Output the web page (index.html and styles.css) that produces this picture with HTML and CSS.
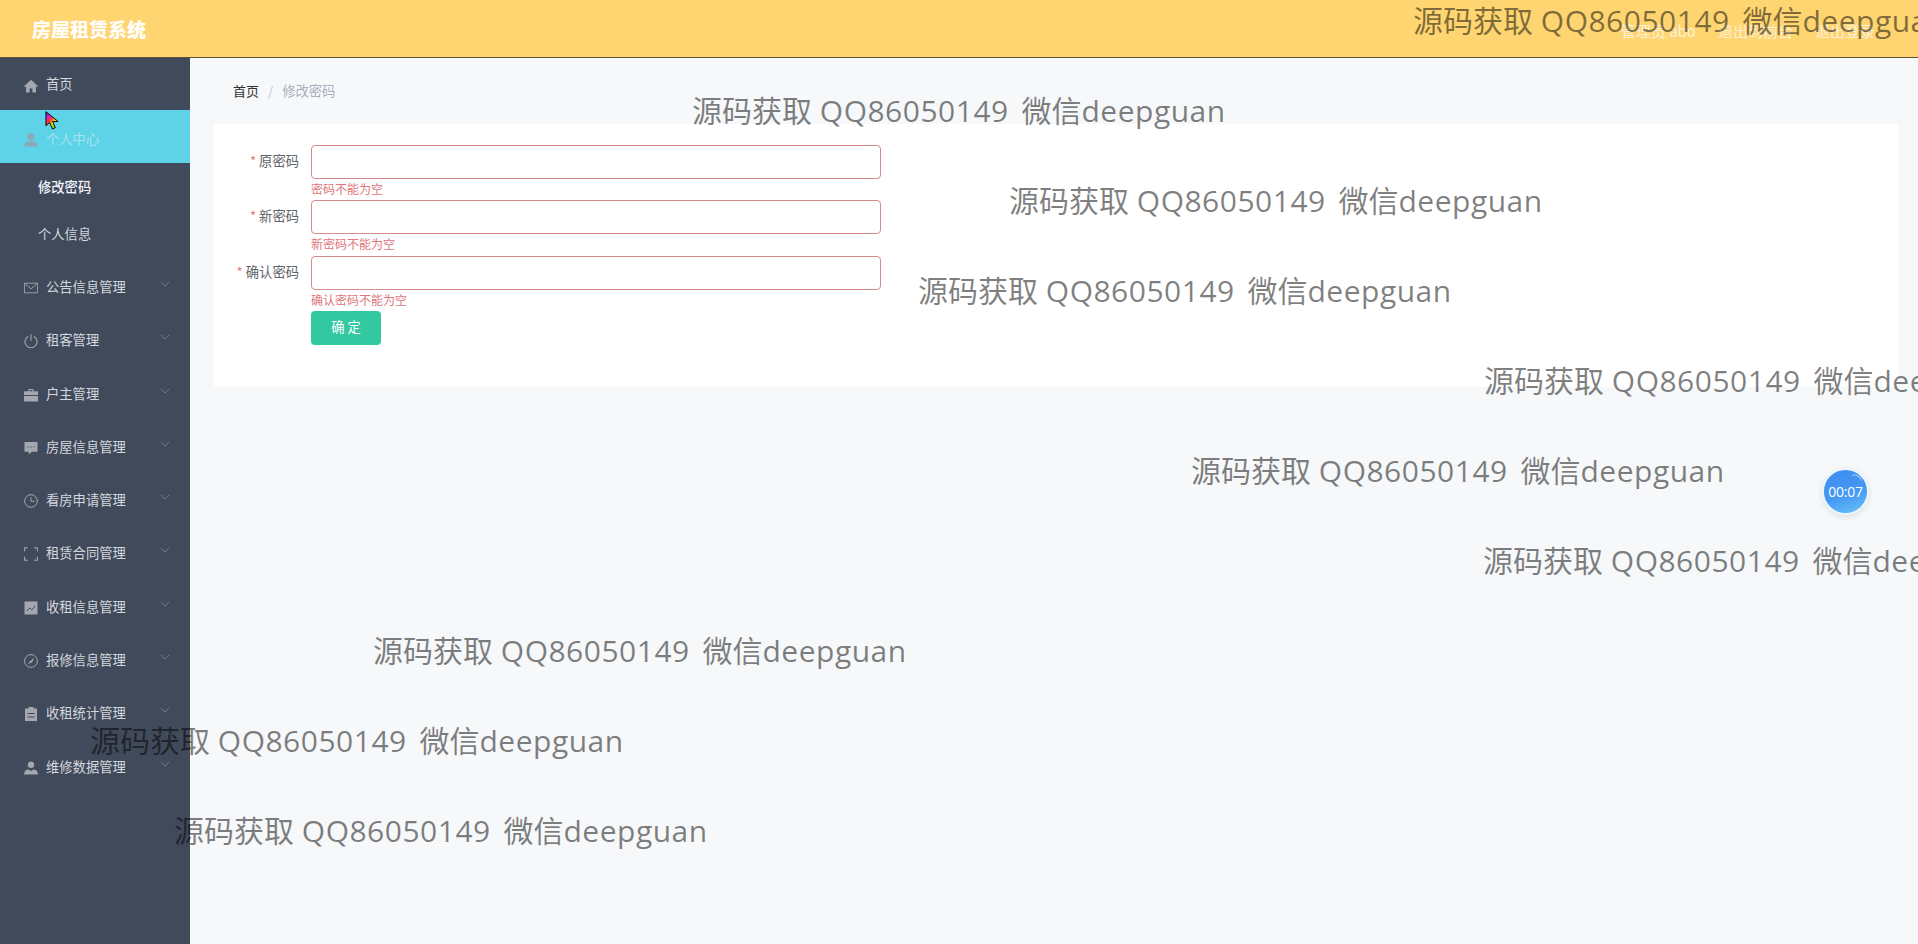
FILE: index.html
```html
<!DOCTYPE html>
<html lang="zh">
<head>
<meta charset="utf-8">
<title>房屋租赁系统</title>
<link rel="stylesheet" href="styles.css">
</head>
<body>
<svg class="defs" width="0" height="0" aria-hidden="true">
  <symbol id="i-home" viewBox="0 0 14 14"><path fill="currentColor" d="M7 .8 0 7.200l.9 1L2 7.300V13.500h3.600V9.600h2.800v3.900H12V7.300l1.100.9.9-1z"/></symbol>
  <symbol id="i-user" viewBox="0 0 14 14"><circle cx="7" cy="4" r="3.400" fill="currentColor"/><path fill="currentColor" d="M.6 13.600c0-3.200 1.800-5 4-5h4.800c2.200 0 4 1.800 4 5z"/></symbol>
  <symbol id="i-mail" viewBox="0 0 16 14"><path fill="none" stroke="currentColor" d="M.5 1.500h15v11H.5zM.8 1.800 8 8l7.200-6.200"/></symbol>
  <symbol id="i-power" viewBox="0 0 14 14"><path fill="none" stroke="currentColor" stroke-width="1.100" d="M4.200 2.400a6 6 0 1 0 5.600 0M7 .3v6.400"/></symbol>
  <symbol id="i-case" viewBox="0 0 14 14"><path fill="currentColor" d="M4.500 1h5v2.300h4.500v3.700H0V3.300h4.500zM5.600 2.100v1.200h2.800V2.100zM0 8h14v5.500H0z"/></symbol>
  <symbol id="i-chat" viewBox="0 0 14 14"><path fill="currentColor" d="M.5 1h13v9.800H7.800L4.700 13.500v-2.700H.5z"/><g fill="#5d6472"><circle cx="4" cy="6" r=".8"/><circle cx="7" cy="6" r=".8"/><circle cx="10" cy="6" r=".8"/></g></symbol>
  <symbol id="i-time" viewBox="0 0 14 14"><path fill="none" stroke="currentColor" d="M7 .7a6.300 6.300 0 1 0 0 12.600A6.300 6.300 0 0 0 7 .7zM7 3.200V7.300h3.400"/></symbol>
  <symbol id="i-full" viewBox="0 0 14 14"><path fill="none" stroke="currentColor" stroke-width="1.100" d="M4 .8H.6v3.400M10 .8h3.400v3.400M.6 9.800v3.400H4M13.400 9.800v3.400H10"/></symbol>
  <symbol id="i-data" viewBox="0 0 14 14"><path fill="currentColor" d="M.5.500h13v13H.5z"/><path fill="none" stroke="#414a5b" d="m2.800 10 3-3 2 1.800 3.400-4"/></symbol>
  <symbol id="i-compass" viewBox="0 0 14 14"><circle cx="7" cy="7" r="6.400" fill="none" stroke="currentColor"/><path fill="currentColor" d="m10.200 3.800-2 4.500-2.500-.9z M3.800 10.200l1.900-2.800 2.500.9z"/></symbol>
  <symbol id="i-order" viewBox="0 0 14 14"><path fill="currentColor" d="M4.500 0h5v1.500H13v12.500H1V1.500h3.500zM3.500 6v1h7V6zM3.500 9.500v1h7v-1z"/></symbol>
  <symbol id="i-custom" viewBox="0 0 14 14"><circle cx="7" cy="3.800" r="3.200" fill="currentColor"/><path fill="currentColor" d="M0 13.600c0-3.300 2-5.200 4.500-5.200L7 10l2.500-1.600c2.500 0 4.500 1.900 4.500 5.200z"/></symbol>
  <symbol id="i-chev" viewBox="0 0 12 7"><path fill="none" stroke="currentColor" d="m1 1 5 5 5-5"/></symbol>
</svg>

<header class="topbar">
  <div class="brand">房屋租赁系统</div>
  <div class="topbar-links">
    <span>管理员 abo</span>
    <span>退出到前台</span>
    <span>退出登录</span>
  </div>
</header>

<div class="shell">
  <aside class="sidebar">
    <nav class="menu">
      <a class="menu-item is-first"><svg class="ico"><use href="#i-home"/></svg><span>首页</span></a>
      <a class="menu-item is-active"><svg class="ico"><use href="#i-user"/></svg><span>个人中心</span><svg class="chev chev-up"><use href="#i-chev"/></svg></a>
      <div class="submenu">
        <a class="sub-item is-current">修改密码</a>
        <a class="sub-item">个人信息</a>
      </div>
      <a class="menu-item"><svg class="ico"><use href="#i-mail"/></svg><span>公告信息管理</span><svg class="chev"><use href="#i-chev"/></svg></a>
      <a class="menu-item"><svg class="ico"><use href="#i-power"/></svg><span>租客管理</span><svg class="chev"><use href="#i-chev"/></svg></a>
      <a class="menu-item"><svg class="ico"><use href="#i-case"/></svg><span>户主管理</span><svg class="chev"><use href="#i-chev"/></svg></a>
      <a class="menu-item"><svg class="ico"><use href="#i-chat"/></svg><span>房屋信息管理</span><svg class="chev"><use href="#i-chev"/></svg></a>
      <a class="menu-item"><svg class="ico"><use href="#i-time"/></svg><span>看房申请管理</span><svg class="chev"><use href="#i-chev"/></svg></a>
      <a class="menu-item"><svg class="ico"><use href="#i-full"/></svg><span>租赁合同管理</span><svg class="chev"><use href="#i-chev"/></svg></a>
      <a class="menu-item"><svg class="ico"><use href="#i-data"/></svg><span>收租信息管理</span><svg class="chev"><use href="#i-chev"/></svg></a>
      <a class="menu-item"><svg class="ico"><use href="#i-compass"/></svg><span>报修信息管理</span><svg class="chev"><use href="#i-chev"/></svg></a>
      <a class="menu-item"><svg class="ico"><use href="#i-order"/></svg><span>收租统计管理</span><svg class="chev"><use href="#i-chev"/></svg></a>
      <a class="menu-item"><svg class="ico"><use href="#i-custom"/></svg><span>维修数据管理</span><svg class="chev"><use href="#i-chev"/></svg></a>
    </nav>
  </aside>

  <main class="main">
    <div class="crumbs"><b>首页</b><i>/</i><span>修改密码</span></div>
    <form class="card">
      <div class="row">
        <label class="lbl"><em>*</em> 原密码</label>
        <div class="field"><input class="inp" type="password"><div class="err">密码不能为空</div></div>
      </div>
      <div class="row">
        <label class="lbl"><em>*</em> 新密码</label>
        <div class="field"><input class="inp" type="password"><div class="err">新密码不能为空</div></div>
      </div>
      <div class="row">
        <label class="lbl"><em>*</em> 确认密码</label>
        <div class="field"><input class="inp" type="password"><div class="err">确认密码不能为空</div></div>
      </div>
      <div class="row row-btn">
        <button class="btn" type="button">确 定</button>
      </div>
    </form>
  </main>
</div>

<div class="wm wm-0">源码获取 <b>QQ86050149</b> <u>微信</u><b>deepguan</b></div>
<div class="wm wm-1">源码获取 <b>QQ86050149</b> <u>微信</u><b>deepguan</b></div>
<div class="wm wm-2">源码获取 <b>QQ86050149</b> <u>微信</u><b>deepguan</b></div>
<div class="wm wm-3">源码获取 <b>QQ86050149</b> <u>微信</u><b>deepguan</b></div>
<div class="wm wm-4">源码获取 <b>QQ86050149</b> <u>微信</u><b>deepguan</b></div>
<div class="wm wm-5">源码获取 <b>QQ86050149</b> <u>微信</u><b>deepguan</b></div>
<div class="wm wm-6">源码获取 <b>QQ86050149</b> <u>微信</u><b>deepguan</b></div>
<div class="wm wm-7">源码获取 <b>QQ86050149</b> <u>微信</u><b>deepguan</b></div>
<div class="wm wm-8">源码获取 <b>QQ86050149</b> <u>微信</u><b>deepguan</b></div>
<div class="wm wm-9">源码获取 <b>QQ86050149</b> <u>微信</u><b>deepguan</b></div>

<div class="timer">00:07</div>

<svg class="cursor" viewBox="0 0 16 24">
  <defs><linearGradient id="rb" x1="0" y1="0" x2=".7" y2="1"><stop offset="0" stop-color="#3a2bd8"/><stop offset=".3" stop-color="#e01ad0"/><stop offset=".5" stop-color="#ff3b1a"/><stop offset=".7" stop-color="#ffe21a"/><stop offset="1" stop-color="#2fd24a"/></linearGradient></defs>
  <path fill="url(#rb)" stroke="#000" d="M1 1v15l4-3.500 3 7 3-1.500-3-6.500h6z"/>
</svg>
</body>
</html>
```
FILE: styles.css
```css
* { box-sizing: border-box; }
html, body { margin: 0; height: 100%; overflow: hidden; }
body {
  font-family: "Noto Sans CJK SC", "Open Sans", sans-serif;
  background: #f6f8fa;
  color: #606266;
  display: flex;
  flex-direction: column;
  position: relative;
}
.defs { position: absolute; }

.topbar {
  flex: none;
  height: 58px;
  background: #ffd572;
  border-bottom: 1px solid #5c5135;
  display: flex;
  align-items: center;
  justify-content: space-between;
  padding: 0 43px 0 32px;
}
.brand { color: #fff; font-size: 19px; font-weight: 700; line-height: 1; text-shadow: 0 0 1px rgba(255,255,255,.7); }
.topbar-links { display: flex; gap: 22px; font-size: 15px; color: rgba(255,255,255,.7); padding-top: 4px; }

.shell { flex: 1; display: flex; min-height: 0; }
.sidebar { flex: none; width: 190px; background: #414a5b; }
.menu { display: flex; flex-direction: column; }
.menu-item {
  height: 53.300px;
  flex: none;
  display: flex;
  align-items: center;
  padding: 0 20px 0 24px;
  color: #d3d7de;
  font-size: 13.300px;
}
.menu-item span { flex: 1; margin-left: 8px; }
.is-first { height: 52px; padding-bottom: 2px; }
.ico { width: 14px; height: 14px; color: #a3a7af; flex: none; margin-top: 3px; }
.is-first .ico { margin-top: 5px; }
.chev { width: 10px; height: 6px; color: #7f8695; flex: none; margin-top: -5px; }
.chev-up { transform: rotate(180deg); }
.is-active { background: #5ed2e6; color: #a5e4ef; padding-top: 3px; }
.is-active .ico { color: #8fa8b5; }
.is-active .chev { color: #7fd0de; }
.submenu { height: 96.500px; flex: none; }
.sub-item {
  height: 47.300px;
  display: flex;
  align-items: center;
  padding-left: 38px;
  color: #d3d7de;
  font-size: 13.300px;
}
.is-current { color: #f1f5f9; font-weight: 500; height: 47px; }

.main { flex: 1; min-width: 0; padding: 0 20px 0 24px; }
.crumbs {
  height: 66px;
  padding: 0 0 2px 19px;
  display: flex;
  align-items: center;
  font-size: 13px;
  color: #a9b0bd;
}
.crumbs b { color: #303133; font-weight: 400; }
.crumbs i { margin: 0 9px; font-style: normal; color: #c0c4cc; }
.crumbs span { font-size: 13.300px; }
.card {
  background: #fff;
  height: 263px;
  padding: 21px 0 0;
  display: flex;
  flex-direction: column;
}
.row { display: flex; height: 55px; flex: none; }
.row:nth-child(2) { height: 56px; }
.lbl {
  width: 85px;
  height: 32px;
  line-height: 32px;
  text-align: right;
  font-size: 13.300px;
  color: #606266;
  flex: none;
}
.lbl em { color: #e07a7a; font-style: normal; }
.field { margin-left: 12px; width: 570px; }
.inp {
  display: block;
  width: 570px;
  height: 34px;
  padding: 0 12px;
  border: 1px solid #d68a8e;
  border-radius: 4px;
  background: #fff;
  outline: 0;
}
.err { font-size: 12px; line-height: 20px; height: 20px; color: #e0757c; }
.row-btn { padding-left: 97px; height: 34px; }
.btn {
  width: 70px;
  height: 34px;
  border: 0;
  border-radius: 4px;
  background: #33c9a0;
  color: #fff;
  font: 400 13.300px/32px "Noto Sans CJK SC", sans-serif;
  padding: 0 0 2px;
}

.wm {
  position: absolute;
  white-space: nowrap;
  font-family: "Open Sans", "Noto Sans CJK SC", sans-serif;
  font-size: 30px;
  line-height: 40px;
  color: rgba(0,0,0,.5);
  pointer-events: none;
}
.wm b { font-weight: 400; letter-spacing: .5px; }
.wm u { text-decoration: none; margin-left: 5px; }
.wm-0 { left: 1413px; top: 1px; }
.wm-1 { left: 692px; top: 91px; }
.wm-2 { left: 1009px; top: 181px; }
.wm-3 { left: 918px; top: 271px; }
.wm-4 { left: 1484px; top: 361px; }
.wm-5 { left: 1191px; top: 451px; }
.wm-6 { left: 1483px; top: 541px; }
.wm-7 { left: 373px; top: 631px; }
.wm-8 { left: 90px; top: 721px; }
.wm-9 { left: 174px; top: 811px; }

.timer {
  position: absolute;
  left: 1822px;
  top: 468px;
  width: 47px;
  height: 47px;
  border-radius: 50%;
  border: 2px solid #eaf6fe;
  background: linear-gradient(160deg, #3f8cf0 0%, #4398f2 55%, #6cc3f8 100%);
  box-shadow: 0 2px 6px rgba(0,0,0,.1);
  color: #fff;
  font: 14px/43px "Open Sans", sans-serif;
  letter-spacing: -.2px;
  text-align: center;
}
.timer::after {
  content: "";
  position: absolute;
  right: 5px;
  top: 5px;
  width: 12px;
  height: 8px;
  border-top: 1px solid rgba(255,255,255,.7);
  border-radius: 50%;
  transform: rotate(30deg);
}
.cursor { position: absolute; left: 45px; top: 110px; width: 15px; height: 24px; }
```
